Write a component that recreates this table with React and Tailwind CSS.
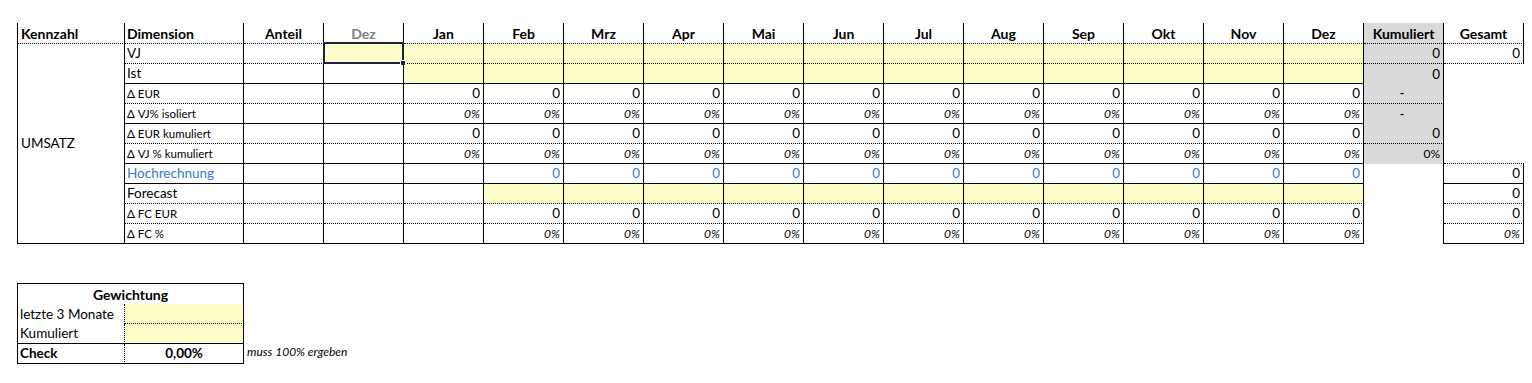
import React from 'react';

const MONTHS = ['Jan', 'Feb', 'Mrz', 'Apr', 'Mai', 'Jun', 'Jul', 'Aug', 'Sep', 'Okt', 'Nov', 'Dez'];

const ROWS = [
  { label: 'VJ', size: 'big', bottom: 'dotted', kind: 'vj', kum: '0', ges: '0' },
  { label: 'Ist', size: 'big', bottom: 'solid', kind: 'ist', kum: '0' },
  { label: 'Δ EUR', size: 'small', bottom: 'dotted', kind: 'num', kum: '-' },
  { label: 'Δ VJ% isoliert', size: 'small', bottom: 'solid', kind: 'pct', kum: '-' },
  { label: 'Δ EUR kumuliert', size: 'small', bottom: 'dotted', kind: 'num', kum: '0' },
  { label: 'Δ VJ % kumuliert', size: 'small', bottom: 'solid', kind: 'pct', kum: '0%' },
  { label: 'Hochrechnung', size: 'big', blue: true, bottom: 'solid', kind: 'hr', ges: '0' },
  { label: 'Forecast', size: 'big', bottom: 'dotted', kind: 'fc', ges: '0' },
  { label: 'Δ FC EUR', size: 'small', bottom: 'dotted', kind: 'fcnum', ges: '0' },
  { label: 'Δ FC %', size: 'small', bottom: 'solid', kind: 'fcpct', ges: '0%' },
];

function Num({ v, blue }) {
  return <span className={`text-[13.5px] ${blue ? 'text-[#2e7bd0]' : 'text-black'}`}>{v}</span>;
}

function Pct() {
  return <span className="text-[12px] italic">0%</span>;
}

function monthCell(kind, i) {
  if (kind === 'vj' || kind === 'ist') return { bg: 'bg-[#ffffcc]', content: null };
  if (kind === 'num') return { content: <Num v="0" /> };
  if (kind === 'pct') return { content: <Pct /> };
  if (i === 0) return { content: null };
  if (kind === 'hr') return { content: <Num v="0" blue /> };
  if (kind === 'fc') return { bg: 'bg-[#ffffcc]', content: null };
  if (kind === 'fcnum') return { content: <Num v="0" /> };
  return { content: <Pct /> };
}

function MainTable() {
  return (
    <div className="ml-[17px] grid grid-cols-[108px_119px_repeat(16,80px)] grid-rows-[21px_repeat(10,20px)] w-max">
      {/* header */}
      <div className="border-l border-r border-b border-black [border-bottom-style:dotted] flex items-center pl-[3px] font-bold text-[14px]">
        Kennzahl
      </div>
      <div className="border-r border-b border-black [border-bottom-style:dotted] flex items-center pl-[2px] font-bold text-[14px]">
        Dimension
      </div>
      <div className="border-r border-b border-black [border-bottom-style:dotted] flex items-center justify-center font-bold text-[14px]">
        Anteil
      </div>
      <div className="border-r border-b border-black [border-bottom-style:dotted] flex items-center justify-center font-bold text-[14px] text-[#808080]">
        Dez
      </div>
      {MONTHS.map((m) => (
        <div key={m} className="border-r border-b border-black [border-bottom-style:dotted] flex items-center justify-center font-bold text-[14px]">
          {m}
        </div>
      ))}
      <div className="border-r border-b border-black [border-bottom-style:dotted] bg-[#d9d9d9] flex items-center justify-center font-bold text-[14px]">
        Kumuliert
      </div>
      <div className="border-r border-b border-black [border-bottom-style:dotted] flex items-center justify-center font-bold text-[14px]">
        Gesamt
      </div>

      {/* Kennzahl merged over all rows */}
      <div className="row-span-10 border-l border-r border-b border-black flex items-center pl-[3px] text-[13.5px]">
        UMSATZ
      </div>

      {ROWS.map((r, ri) => {
        const bb = r.bottom === 'dotted' ? '[border-bottom-style:dotted]' : '';
        const base = `border-r border-b border-black ${bb}`;
        const kumGrey = ri < 6;
        const kumBottom = kumGrey && ri % 2 === 0 ? 'border-b border-black [border-bottom-style:dotted]' : '';
        let gesCls = '';
        if (ri === 0) gesCls = 'border-r border-b border-black [border-bottom-style:dotted]';
        else if (ri === 5) gesCls = 'border-b border-black [border-bottom-style:dotted]';
        else if (ri >= 6) gesCls = `border-r border-b border-black ${bb}`;
        return (
          <React.Fragment key={r.label}>
            <div
              className={`${base} flex items-center pl-[2px] ${r.size === 'big' ? 'text-[13.5px]' : 'text-[11.5px]'} ${r.blue ? 'text-[#2e7bd0]' : ''}`}
            >
              {r.label}
            </div>
            <div className={base} />
            <div className={`${base} relative ${ri === 0 ? 'bg-[#ffffcc]' : ''}`}>
              {ri === 0 && (
                <div className="absolute -left-[1px] -top-[2px] -right-[1px] -bottom-[1px] border-2 border-[#1c2140]">
                  <div className="absolute -right-[4px] -bottom-[4px] w-[6px] h-[6px] bg-[#1c2140] border border-white" />
                </div>
              )}
            </div>
            {MONTHS.map((m, i) => {
              const c = monthCell(r.kind, i);
              return (
                <div key={m} className={`${base} ${c.bg || ''} flex items-center justify-end pr-[3px]`}>
                  {c.content}
                </div>
              );
            })}
            <div
              className={`border-r border-black ${kumBottom} ${kumGrey ? 'bg-[#d9d9d9]' : ''} flex items-center ${r.kum === '-' ? 'justify-center' : 'justify-end'} pr-[3px] text-[13.5px]`}
            >
              {kumGrey && (r.kum === '0%' ? <span className="text-[12px]">0%</span> : r.kum)}
            </div>
            <div className={`${gesCls} flex items-center justify-end pr-[3px]`}>
              {r.ges === '0%' ? <Pct /> : r.ges ? <Num v={r.ges} /> : null}
            </div>
          </React.Fragment>
        );
      })}
    </div>
  );
}

function WeightTable() {
  return (
    <div className="ml-[17px] mt-[39px] flex items-end">
      <div className="grid grid-cols-[108px_119px] grid-rows-[21px_20px_20px_20px]">
        <div className="col-span-2 border-l border-r border-t border-black flex items-center justify-center font-bold text-[14px]">
          Gewichtung
        </div>
        <div className="border-l border-r border-black [border-right-style:dotted] flex items-center pl-[2px] text-[13.5px]">
          letzte 3 Monate
        </div>
        <div className="border-r border-b border-black [border-bottom-style:dotted] bg-[#ffffcc]" />
        <div className="border-l border-r border-b border-black [border-right-style:dotted] flex items-center pl-[2px] text-[13.5px]">
          Kumuliert
        </div>
        <div className="border-r border-b border-black bg-[#ffffcc]" />
        <div className="border-l border-r border-b border-black [border-right-style:dotted] flex items-center pl-[2px] font-bold text-[13.5px]">
          Check
        </div>
        <div className="border-r border-b border-black flex items-center justify-center font-bold text-[13.5px]">
          0,00%
        </div>
      </div>
      <div className="ml-[3px] mb-[3px] italic text-[12px]">muss 100% ergeben</div>
    </div>
  );
}

export default function App() {
  return (
    <div className="w-[1532px] h-[383px] bg-white pt-[23px] text-black font-['Lato',sans-serif] overflow-hidden">
      <MainTable />
      <WeightTable />
    </div>
  );
}
